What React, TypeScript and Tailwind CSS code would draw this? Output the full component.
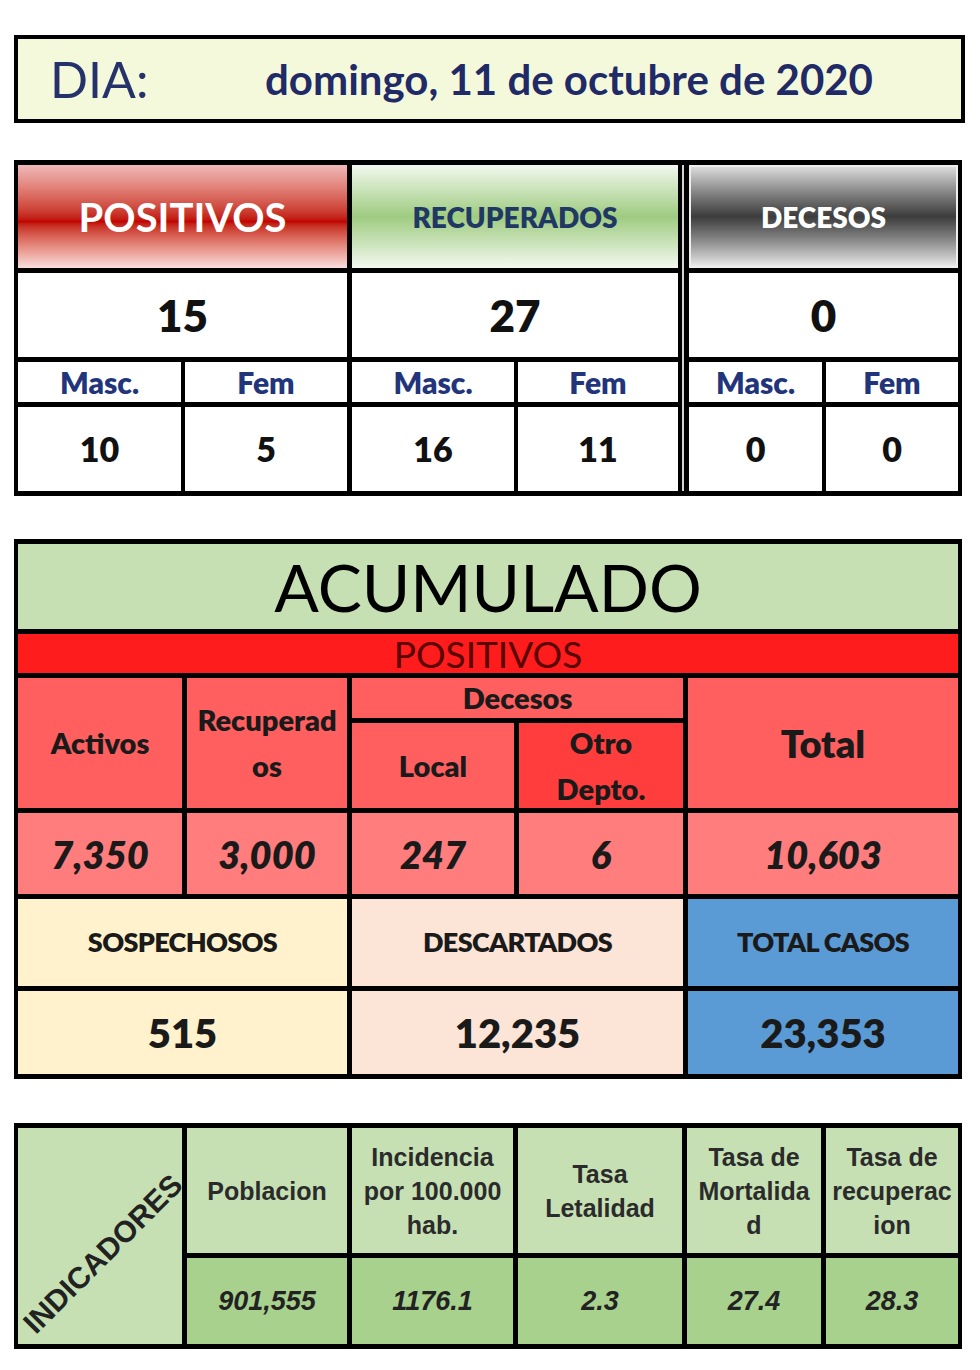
import React from 'react';

const subHead = 'flex items-center justify-center bg-white text-[30px] font-extrabold text-[#22357a] leading-none';
const subVal = 'flex items-center justify-center bg-white text-[34px] font-extrabold text-[#111] leading-none';

function DailyGroup({
  title,
  headClass,
  total,
  masc,
  fem,
  cols,
}: {
  title: React.ReactNode;
  headClass: string;
  total: string;
  masc: string;
  fem: string;
  cols: string;
}) {
  return (
    <div className={`grid ${cols} grid-rows-[103px_84px_40px_84px] gap-x-[4px] gap-y-[5px]`}>
      <div className={`col-span-2 flex items-center justify-center ${headClass}`}>{title}</div>
      <div className="col-span-2 flex items-center justify-center bg-white text-[44px] font-extrabold leading-none text-[#111]">
        {total}
      </div>
      <div className={subHead}>Masc.</div>
      <div className={subHead}>Fem</div>
      <div className={subVal}>{masc}</div>
      <div className={subVal}>{fem}</div>
    </div>
  );
}

function DayHeader() {
  return (
    <div className="ml-[14px] flex h-[88px] w-[951px] items-center border-[4px] border-black bg-[#f5f9dc]">
      <span className="w-[247px] pl-[32px] text-[50px] leading-none text-[#26336b]">DIA:</span>
      <span className="text-[42px] font-bold leading-none text-[#1f2a66]">domingo, 11 de octubre de 2020</span>
    </div>
  );
}

function DailyTable() {
  return (
    <div className="ml-[14px] mt-[37px] flex w-[948px] border-x-[4px] border-y-[5px] border-black bg-black">
      <DailyGroup
        cols="grid-cols-[163px_162px]"
        headClass="bg-linear-to-b from-[#efb9b9] via-[#c00000] via-55% to-[#f8dede] text-[40px] font-bold text-white"
        title="POSITIVOS"
        total="15"
        masc="10"
        fem="5"
      />
      <div className="w-[5px]" />
      <DailyGroup
        cols="grid-cols-[162px_160px]"
        headClass="bg-linear-to-b from-[#f2f8ee] via-[#9fcb80] to-[#f3f9ef] text-[28px] font-extrabold text-[#1f3864]"
        title="RECUPERADOS"
        total="27"
        masc="16"
        fem="11"
      />
      <div className="w-[4px]" />
      <div className="w-[2px] bg-[#d4d4d4]" />
      <div className="w-[5px]" />
      <DailyGroup
        cols="grid-cols-[133px_132px]"
        headClass="border-[2px] border-[#eeeeee] bg-linear-to-b from-[#dcdcdc] via-[#3c3c3c] to-[#e8e8e8] text-[28px] font-extrabold text-white"
        title="DECESOS"
        total="0"
        masc="0"
        fem="0"
      />
    </div>
  );
}

const redHead = 'flex items-center justify-center bg-[#ff5f5f] text-[29px] font-extrabold text-[#1a1a1a] leading-[46px] text-center';
const redVal = 'flex items-center justify-center bg-[#ff7d7d] text-[38px] font-extrabold italic text-[#1a1a1a] leading-none';
const lowHead = 'flex items-center justify-center text-[27px] font-extrabold tracking-tight text-[#1a1a1a]';
const lowVal = 'flex items-center justify-center text-[40px] font-extrabold leading-none text-[#1a1a1a]';

function Acumulado() {
  return (
    <div className="ml-[14px] mt-[43px] grid w-[948px] grid-cols-[164px_160px_162px_164px_270px] grid-rows-[85px_39px_40px_85px_81px_87px_83px] gap-[5px] border-x-[4px] border-y-[5px] border-black bg-black">
      <div className="col-span-5 flex items-center justify-center bg-[#c6e0b4] text-[66px] leading-none text-black">
        ACUMULADO
      </div>
      <div className="col-span-5 flex items-center justify-center bg-[#fe1c1c] text-[37px] leading-[39px] text-[#5a0000]">
        POSITIVOS
      </div>
      <div className={`row-span-2 ${redHead}`}>Activos</div>
      <div className={`row-span-2 ${redHead}`}>
        Recuperad
        <br />
        os
      </div>
      <div className={`col-span-2 ${redHead}`}>Decesos</div>
      <div className="row-span-2 flex items-center justify-center bg-[#ff5f5f] text-[38px] font-extrabold text-[#1a1a1a]">Total</div>
      <div className={redHead}>Local</div>
      <div className="flex items-center justify-center bg-[#ff3d3d] text-center text-[29px] font-extrabold leading-[46px] text-[#1a1a1a]">
        Otro
        <br />
        Depto.
      </div>
      <div className={redVal}>7,350</div>
      <div className={redVal}>3,000</div>
      <div className={redVal}>247</div>
      <div className={redVal}>6</div>
      <div className={redVal}>10,603</div>
      <div className={`col-span-2 bg-[#fff2cc] ${lowHead}`}>SOSPECHOSOS</div>
      <div className={`col-span-2 bg-[#fce4d6] ${lowHead}`}>DESCARTADOS</div>
      <div className={`bg-[#5b9bd5] ${lowHead}`}>TOTAL CASOS</div>
      <div className={`col-span-2 bg-[#fff2cc] ${lowVal}`}>515</div>
      <div className={`col-span-2 bg-[#fce4d6] ${lowVal}`}>12,235</div>
      <div className={`bg-[#5b9bd5] ${lowVal}`}>23,353</div>
    </div>
  );
}

const indHead = 'flex items-center justify-center bg-[#c6e0b4] text-center text-[25px] font-bold leading-[34px] text-[#2b2b2b]';
const indVal = 'flex items-center justify-center bg-[#a9d18e] text-[27px] font-bold italic leading-none text-[#222]';

function Indicadores() {
  return (
    <div className="ml-[14px] mt-[44px] grid w-[948px] grid-cols-[164px_160px_161px_164px_134px_132px] grid-rows-[125px_86px] gap-[5px] border-x-[4px] border-y-[5px] border-black bg-black font-['Liberation_Sans',Arial,sans-serif]">
      <div className="relative row-span-2 bg-[#c6e0b4]">
        <div className="absolute inset-0 flex translate-x-[3px] translate-y-[18px] items-center justify-center">
          <span className="relative z-10 -rotate-45 whitespace-nowrap text-[30px] font-bold leading-none text-[#222]">
            INDICADORES
          </span>
        </div>
      </div>
      <div className={indHead}>Poblacion</div>
      <div className={indHead}>
        Incidencia
        <br />
        por 100.000
        <br />
        hab.
      </div>
      <div className={indHead}>
        Tasa
        <br />
        Letalidad
      </div>
      <div className={indHead}>
        Tasa de
        <br />
        Mortalida
        <br />d
      </div>
      <div className={indHead}>
        Tasa de
        <br />
        recuperac
        <br />
        ion
      </div>
      <div className={indVal}>901,555</div>
      <div className={indVal}>1176.1</div>
      <div className={indVal}>2.3</div>
      <div className={indVal}>27.4</div>
      <div className={indVal}>28.3</div>
    </div>
  );
}

export default function App() {
  return (
    <div className="min-h-[1370px] w-[980px] bg-white pt-[35px] font-['Lato',sans-serif]">
      <DayHeader />
      <DailyTable />
      <Acumulado />
      <Indicadores />
    </div>
  );
}
